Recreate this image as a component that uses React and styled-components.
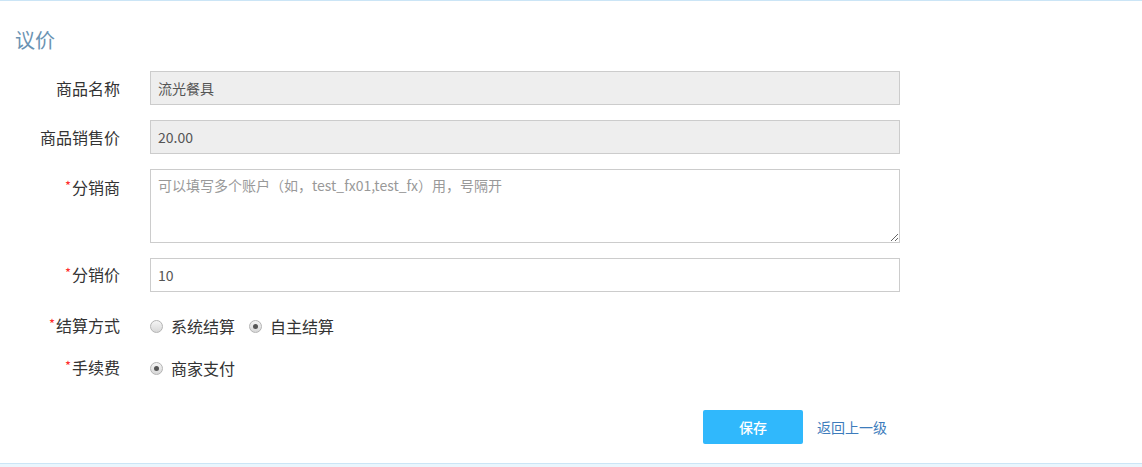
import React from "react";
import styled, { createGlobalStyle } from "styled-components";

const Global = createGlobalStyle`
  html, body { margin: 0; padding: 0; background: #fff; }
  body { font-family: "Noto Sans CJK SC", "Noto Sans", sans-serif; color: #333; }
  * { box-sizing: border-box; }
`;

const Page = styled.div`
  width: 1142px;
  height: 467px;
  display: flex;
  flex-direction: column;
  background: #eaf6fd;
`;

const Panel = styled.div`
  height: 464px;
  background: #fff;
  border-top: 1px solid #cbe5f6;
  border-bottom: 1px solid #cbe5f6;
  display: flex;
  flex-direction: column;
`;

const Title = styled.h2`
  margin: 27px 0 0 15px;
  font-size: 20px;
  line-height: 24px;
  font-weight: 400;
  color: #6a93b2;
`;

const Form = styled.div`
  display: flex;
  flex-direction: column;
  margin-top: 19px;
`;

const Row = styled.div`
  display: grid;
  grid-template-columns: 120px 750px;
  column-gap: 30px;
  align-items: ${(p) => (p.$top ? "start" : "center")};
  min-height: ${(p) => p.$h || 34}px;
  margin-top: ${(p) => p.$mt || 0}px;
`;

const Label = styled.div`
  text-align: right;
  font-size: 16px;
  line-height: 20px;
  color: #333;
  padding-top: ${(p) => p.$pt || 0}px;
`;

const Star = styled.span`
  color: #ff2b2b;
  font-size: 13px;
  position: relative;
  top: -3px;
  margin-right: 1px;
`;

const Input = styled.input`
  width: 750px;
  height: 34px;
  border: 1px solid #cccccc;
  background: ${(p) => (p.readOnly ? "#eeeeee" : "#fff")};
  padding: 0 7px;
  font-family: inherit;
  font-size: 14px;
  color: #555;
  outline: none;
`;

const Area = styled.textarea`
  width: 750px;
  height: 74px;
  border: 1px solid #cccccc;
  padding: 5px 7px;
  font-family: inherit;
  font-size: 14px;
  line-height: 20px;
  color: #555;
  outline: none;
  display: block;
  &::placeholder { color: #999; }
`;

const Options = styled.div`
  display: flex;
  align-items: center;
  gap: 14px;
`;

const Option = styled.label`
  display: flex;
  align-items: center;
  gap: 8px;
  font-size: 16px;
  line-height: 20px;
  color: #333;
`;

const Radio = styled.span`
  width: 13px;
  height: 13px;
  border-radius: 50%;
  border: 1px solid #b4b4b4;
  background: linear-gradient(#f4f4f4, #d8d8d8);
  display: flex;
  align-items: center;
  justify-content: center;
  &::after {
    content: "";
    width: 5px;
    height: 5px;
    border-radius: 50%;
    background: ${(p) => (p.$checked ? "#555" : "transparent")};
  }
`;

const Actions = styled.div`
  display: flex;
  align-items: center;
  justify-content: flex-end;
  gap: 14px;
  padding-right: 13px;
`;

const SaveButton = styled.button`
  width: 100px;
  height: 34px;
  border: none;
  border-radius: 2px;
  background: #30b8fc;
  color: #fff;
  font-family: inherit;
  font-size: 14px;
  font-weight: 500;
`;

const BackLink = styled.a`
  font-size: 14px;
  color: #3d7cbc;
  text-decoration: none;
  line-height: 20px;
`;

export default function App() {
  return (
    <Page>
      <Global />
      <Panel>
        <Title>议价</Title>
        <Form>
          <Row>
            <Label>商品名称</Label>
            <Input readOnly value="流光餐具" />
          </Row>
          <Row $mt={15}>
            <Label>商品销售价</Label>
            <Input readOnly value="20.00" />
          </Row>
          <Row $mt={15} $top $h={74}>
            <Label $pt={8}><Star>*</Star>分销商</Label>
            <Area placeholder="可以填写多个账户（如，test_fx01,test_fx）用，号隔开" />
          </Row>
          <Row $mt={15}>
            <Label><Star>*</Star>分销价</Label>
            <Input defaultValue="10" />
          </Row>
          <Row $mt={20} $h={28}>
            <Label><Star>*</Star>结算方式</Label>
            <Options>
              <Option><Radio />系统结算</Option>
              <Option><Radio $checked />自主结算</Option>
            </Options>
          </Row>
          <Row $mt={14} $h={28}>
            <Label><Star>*</Star>手续费</Label>
            <Options>
              <Option><Radio $checked />商家支付</Option>
            </Options>
          </Row>
          <Row $mt={28}>
            <div />
            <Actions>
              <SaveButton>保存</SaveButton>
              <BackLink href="#">返回上一级</BackLink>
            </Actions>
          </Row>
        </Form>
      </Panel>
    </Page>
  );
}
